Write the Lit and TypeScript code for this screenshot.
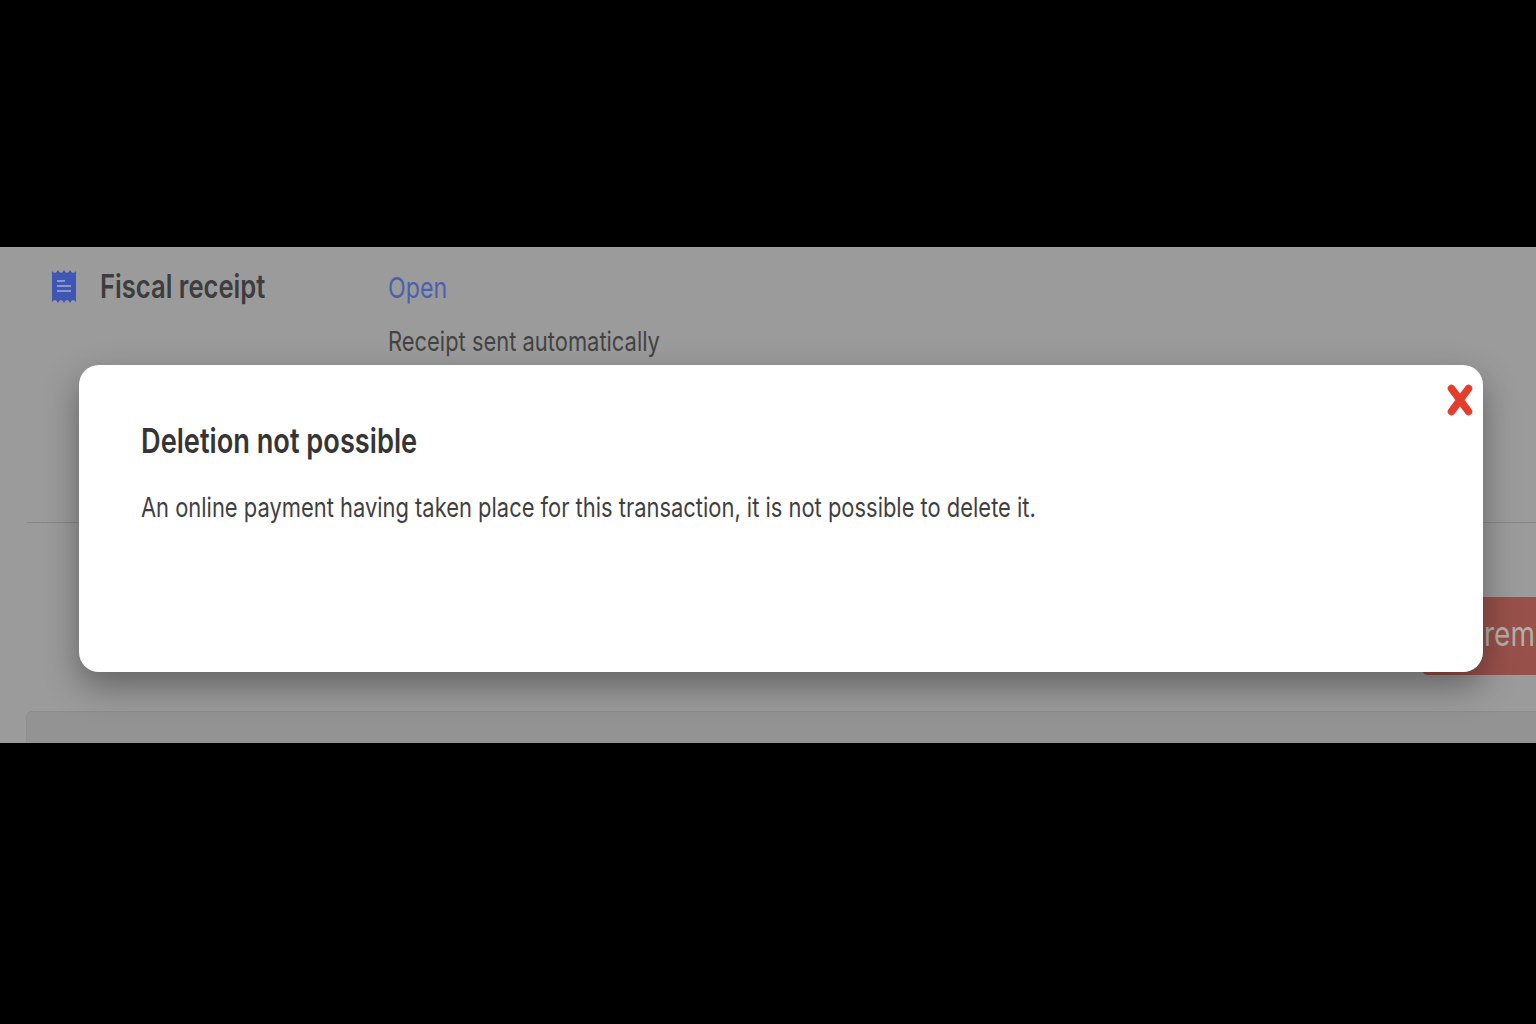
import { LitElement, html, css } from "lit";
import { customElement } from "lit/decorators.js";

@customElement("app-root")
export class AppRoot extends LitElement {
  static styles = css`
    :host { display: block; width: 1536px; height: 1024px; background: #000; overflow: hidden; font-family: "Inter", "Liberation Sans", sans-serif; }
    .bar { height: 247px; background: #000; }
    .stage { position: relative; height: 496px; overflow: hidden; background: #9b9b9b; display: flex; flex-direction: column; }
    .wide { display: inline-block; transform: scaleX(0.8); transform-origin: left center; white-space: nowrap; }
    .receipt { display: flex; padding: 22px 0 0 52px; height: 275px; box-sizing: border-box; }
    .ic { width: 24px; height: 34px; display: block; flex: none; }
    .label { width: 288px; margin-left: 24px; height: 36px; line-height: 36px; font-size: 32px; font-weight: 600; color: #3d3d3f; flex: none; }
    .vals { display: flex; flex-direction: column; gap: 17px; }
    .open { font-size: 29px; line-height: 37px; color: #4c5fae; }
    .sent { font-size: 27.4px; line-height: 36px; color: #434343; }
    .rule { height: 1px; background: #888; margin-left: 27px; flex: none; }
    .action { display: flex; justify-content: flex-end; margin-top: 74px; flex: none; }
    .remove { width: 114px; height: 78px; background: #98504a; border-radius: 6px 0 0 6px; color: #b0b0ac; font-size: 35px; line-height: 72px; box-sizing: border-box; padding-left: 62px; overflow: hidden; }
    .panel { margin: 36px 0 0 26px; flex: 1; background: #939393; border-top: 1px solid #8c8c8c; border-left: 1px solid #8f8f8f; border-radius: 6px 0 0 0; }
    .modal { position: absolute; left: 79px; top: 118px; width: 1404px; height: 307px; box-sizing: border-box; background: #fff; border-radius: 20px; box-shadow: 0 14px 34px rgba(0,0,0,.36); padding: 55px 62px 0; }
    .title { font-size: 34px; line-height: 42px; font-weight: 600; color: #353538; }
    .body { margin-top: 25px; font-size: 27.4px; line-height: 40px; color: #3f3f42; }
    .close { position: absolute; right: 9px; top: 19px; width: 28px; height: 32px; display: block; }
  `;
  render() {
    return html`
      <div class="bar"></div>
      <div class="stage">
        <div class="receipt">
          <svg class="ic" viewBox="0 0 24 34" aria-hidden="true">
            <path fill="#3f57b4" d="M0 2q1.500 2 3 2t3-3q1.500 3 3 3t3-3q1.500 3 3 3t3-3q1.500 3 3 3t3-2v31q-1.500-2-3-2t-3 3q-1.500-3-3-3t-3 3q-1.500-3-3-3t-3 3q-1.500-3-3-3t-3 2z"/>
            <path fill="none" stroke="#8b99c9" stroke-width="2" d="M5 12h8M5 17h14M5 22h14"/>
          </svg>
          <div class="label"><span class="wide">Fiscal receipt</span></div>
          <div class="vals">
            <div class="open"><span class="wide">Open</span></div>
            <div class="sent"><span class="wide">Receipt sent automatically</span></div>
          </div>
        </div>
        <div class="rule"></div>
        <div class="action"><div class="remove"><span class="wide">rem</span></div></div>
        <div class="panel"></div>
        <div class="modal">
          <div class="title"><span class="wide">Deletion not possible</span></div>
          <div class="body"><span class="wide">An online payment having taken place for this transaction, it is not possible to delete it.</span></div>
          <svg class="close" viewBox="0 0 28 32" aria-hidden="true">
            <path fill="none" stroke="#e43d2b" stroke-width="7.500" stroke-linecap="round" d="M5.500 4.500l17 23M22.500 4.500L5.500 27.500"/>
          </svg>
        </div>
      </div>
    `;
  }
}
